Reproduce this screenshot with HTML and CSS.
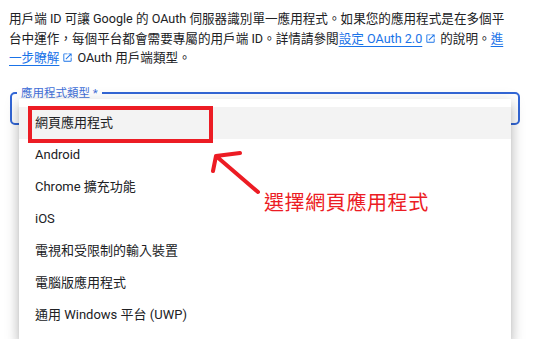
FILE: index.html
```html
<!DOCTYPE html>
<html lang="zh-Hant">
<head>
    <meta charset="UTF-8">
    <meta name="viewport" content="width=device-width, initial-scale=1.0">
    <title>OAuth 用戶端 ID</title>
    <link rel="stylesheet" href="styles.css">
</head>
<body>
    <p class="intro">
        用戶端 ID 可讓 Google 的 OAuth 伺服器識別單一應用程式。如果您的應用程式是在多個平台中運作，每個平台都會需要專屬的用戶端 ID。詳情請參閱<a href="#">設定 OAuth 2.0</a><svg class="ext" viewBox="0 0 24 24"><path d="M19 19H5V5h7V3H5a2 2 0 0 0-2 2v14a2 2 0 0 0 2 2h14c1.1 0 2-.9 2-2v-7h-2v7zM14 3v2h3.59l-9.83 9.83 1.41 1.41L19 6.41V10h2V3h-7z"/></svg>的說明。<a href="#">進一步瞭解</a><svg class="ext" viewBox="0 0 24 24"><path d="M19 19H5V5h7V3H5a2 2 0 0 0-2 2v14a2 2 0 0 0 2 2h14c1.1 0 2-.9 2-2v-7h-2v7zM14 3v2h3.59l-9.83 9.83 1.41 1.41L19 6.41V10h2V3h-7z"/></svg>OAuth 用戶端類型。
    </p>

    <div class="select">
        <div class="outline">
            <span class="field-label">應用程式類型 *</span>
        </div>
        <ul class="menu">
            <li class="selected">網頁應用程式<span class="mark"></span></li>
            <li>Android</li>
            <li>Chrome 擴充功能</li>
            <li>iOS</li>
            <li>電視和受限制的輸入裝置</li>
            <li>電腦版應用程式</li>
            <li>通用 Windows 平台 (UWP)</li>
        </ul>
    </div>

    <!-- annotation -->
    <svg class="arrow" width="60" height="50" viewBox="205 145 60 50">
        <path d="M258 192 L216 156 M216 156 L240 153 M216 156 L213 171" />
    </svg>
    <div class="note">選擇網頁應用程式</div>
</body>
</html>
```

FILE: styles.css
```css
/* General */
body {
    margin: 0;
    font-family: Roboto, "Noto Sans CJK TC", sans-serif;
    color: #202124;
    background: #fff;
}

.intro {
    margin: 0;
    padding: 9px 9px 0;
    width: 498px;
    font-size: 12.6px;
    line-height: 19.5px;
}

.intro a {
    color: #1a73e8;
    text-decoration: underline;
    text-underline-offset: 3px;
}

.intro .ext {
    width: 11px;
    height: 11px;
    margin: 0 4px 0 3px;
    vertical-align: -1px;
    fill: #1a73e8;
}

/* Outlined select field */
.select {
    padding-top: 24px;
}

.outline {
    position: relative;
    margin-left: 10px;
    width: 510px;
    height: 33px;
    box-sizing: border-box;
    border: 2px solid #3367d6;
    border-radius: 5px;
}

.field-label {
    position: absolute;
    top: -9px;
    left: 5px;
    padding: 0 4px;
    background: #fff;
    color: #3f6fd8;
    font-size: 11.5px;
    line-height: 16px;
}

/* Dropdown menu */
.menu {
    position: relative;
    z-index: 2;
    width: 492px;
    margin: -26px 0 0 19px;
    padding: 8px 0;
    list-style: none;
    background: #fff;
    box-shadow: 0 5px 5px -3px rgba(0, 0, 0, 0.2),
                0 8px 10px 1px rgba(0, 0, 0, 0.14),
                0 3px 14px 2px rgba(0, 0, 0, 0.12);
}

.menu li {
    position: relative;
    height: 32px;
    padding-left: 16px;
    font-size: 13px;
    line-height: 32px;
    color: #202124;
}

.menu li.selected {
    background: #f3f3f3;
}

.menu .mark {
    position: absolute;
    top: -1px;
    left: 9px;
    width: 185px;
    height: 37px;
    box-sizing: border-box;
    border: 4px solid #ec1c24;
}

/* Red annotation */
.arrow {
    position: absolute;
    left: 205px;
    top: 145px;
    z-index: 3;
}

.arrow path {
    fill: none;
    stroke: #ec1c24;
    stroke-width: 4;
    stroke-linecap: round;
    stroke-linejoin: round;
}

.note {
    position: absolute;
    left: 264px;
    top: 192px;
    z-index: 3;
    color: #ec1c24;
    font-size: 20px;
    line-height: 22px;
    letter-spacing: 0.6px;
}
```
